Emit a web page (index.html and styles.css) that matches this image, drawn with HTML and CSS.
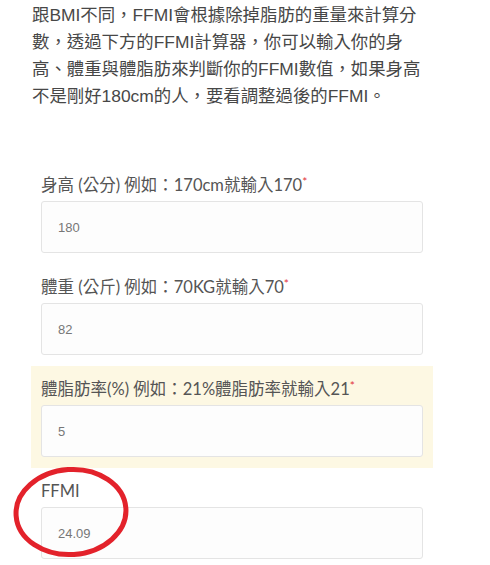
FILE: index.html
```html
<!DOCTYPE html>
<html lang="zh-TW">
<head>
    <meta charset="UTF-8">
    <meta name="viewport" content="width=device-width, initial-scale=1.0">
    <title>FFMI計算器</title>
    <link rel="stylesheet" href="styles.css">
</head>
<body>
    <div class="page">
        <p class="intro">跟BMI不同，FFMI會根據除掉脂肪的重量來計算分數，透過下方的FFMI計算器，你可以輸入你的身高、體重與體脂肪來判斷你的FFMI數值，如果身高不是剛好180cm的人，要看調整過後的FFMI。</p>

        <form class="calc">
            <div class="field">
                <label for="height">身高 (公分) 例如：170cm就輸入170<span class="req">*</span></label>
                <input type="text" id="height" value="180">
            </div>
            <div class="field">
                <label for="weight">體重 (公斤) 例如：70KG就輸入70<span class="req">*</span></label>
                <input type="text" id="weight" value="82">
            </div>
            <div class="field highlight">
                <label for="fat">體脂肪率(%) 例如：21%體脂肪率就輸入21<span class="req">*</span></label>
                <input type="text" id="fat" value="5">
            </div>
            <div class="field result">
                <label for="ffmi">FFMI</label>
                <input type="text" id="ffmi" value="24.09" readonly>
                <!-- 紅圈標註 -->
                <svg class="mark" width="124" height="98" viewBox="0 0 124 98">
                    <ellipse cx="62" cy="49" rx="55" ry="42.5" fill="none" stroke="#e3222b" stroke-width="5" transform="rotate(-4 62 49)"/>
                </svg>
            </div>
        </form>
    </div>
</body>
</html>
```

FILE: styles.css
```css
body {
    margin: 0;
    background-color: #fff;
    font-family: "Liberation Sans", "Noto Sans CJK TC", sans-serif;
    color: #444;
}
.page {
    width: 490px;
    height: 565px;
    overflow: hidden;
}
.intro {
    margin: 0;
    padding: 2px 0 0 32px;
    width: 400px;
    font-size: 17.4px;
    line-height: 27px;
    color: #474747;
}
.calc {
    margin: 52px 0 0 31px;
    width: 402px;
}
.field {
    position: relative;
    padding: 11px 10px;
}
.field label {
    display: block;
    font-family: Lato, "Noto Sans CJK TC", sans-serif;
    font-size: 16.5px;
    line-height: 24px;
    color: #555;
    margin-bottom: 4px;
}
.req {
    color: #e2333a;
    font-size: 12px;
    vertical-align: top;
    line-height: 18px;
}
.field input {
    display: block;
    box-sizing: border-box;
    width: 100%;
    height: 52px;
    padding: 0 16px;
    border: 1px solid #e4e4e4;
    border-radius: 3px;
    background-color: #fdfdfd;
    font-family: "Liberation Sans", sans-serif;
    font-size: 13px;
    color: #777;
    outline: none;
}
.highlight {
    background-color: #fdf8e3;
}
.mark {
    position: absolute;
    left: -22px;
    top: -5px;
}
```
